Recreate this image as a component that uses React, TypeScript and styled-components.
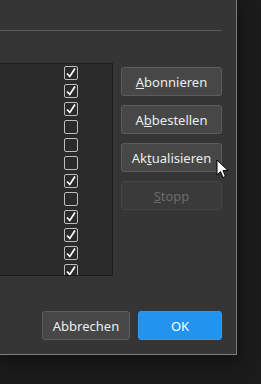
import styled, { createGlobalStyle } from 'styled-components';

const GlobalStyle = createGlobalStyle`
  html, body { margin: 0; padding: 0; }
  body {
    background: #1b1b1b;
    font-family: "Noto Sans", "Open Sans", sans-serif;
    font-size: 13px;
  }
`;

const Screen = styled.div`
  position: relative;
  width: 261px;
  height: 384px;
  overflow: hidden;
  background: #1b1b1b;
`;

const Dialog = styled.div`
  box-sizing: border-box;
  width: 237px;
  height: 355px;
  background: #353535;
  border-right: 1px solid #7d7d7d;
  border-bottom: 1px solid #7d7d7d;
  box-shadow: 0 6px 18px rgba(0, 0, 0, 0.45);
  display: flex;
  flex-direction: column;
  padding: 30px 14px 14px 0;
`;

const Separator = styled.div`
  height: 1px;
  background: #5c5c5c;
`;

const Body = styled.div`
  display: flex;
  gap: 8px;
  margin-top: 32px;
`;

const List = styled.div`
  box-sizing: border-box;
  width: 114px;
  height: 213px;
  background: #2a2a2a;
  border-top: 1px solid #1c1c1c;
  border-right: 1px solid #1c1c1c;
  border-bottom: 1px solid #1c1c1c;
  overflow: hidden;
  display: flex;
  flex-direction: column;
  align-items: flex-end;
  padding: 2px 34px 0 0;
`;

const Row = styled.div`
  flex-shrink: 0;
  height: 18px;
  display: flex;
  align-items: flex-start;
`;

const Box = styled.div`
  box-sizing: border-box;
  width: 14px;
  height: 14px;
  border: 1px solid #bdbdbd;
  border-radius: 2px;
  display: flex;
  align-items: center;
  justify-content: center;
`;

const Side = styled.div`
  display: flex;
  flex-direction: column;
  gap: 9px;
  padding-top: 4px;
`;

const Button = styled.button<{ $primary?: boolean; $width?: number }>`
  box-sizing: border-box;
  width: ${(p) => p.$width ?? 101}px;
  height: 29px;
  border-radius: 3px;
  font-family: inherit;
  font-size: 13px;
  padding: 0;
  cursor: default;
  color: ${(p) => (p.$primary ? '#ffffff' : '#ececec')};
  background: ${(p) => (p.$primary ? '#2293ee' : '#474747')};
  border: 1px solid ${(p) => (p.$primary ? '#2e9cf5' : '#5c5c5c')};
  &:disabled {
    background: #3a3a3a;
    border-color: #444444;
    color: #6b6b6b;
  }
`;

const Footer = styled.div`
  margin-top: auto;
  display: flex;
  justify-content: flex-end;
  gap: 8px;
`;

const Cursor = styled.svg`
  position: absolute;
  left: 216px;
  top: 159px;
`;

const checks = [true, true, true, false, false, false, true, false, true, true, true, true];

const Check = () => (
  <svg width="12" height="12" viewBox="0 0 12 12">
    <path d="M2 6.5 L4.8 9.5 L10 1.5" fill="none" stroke="#ffffff" strokeWidth="1.7" />
  </svg>
);

export default function App() {
  return (
    <Screen>
      <GlobalStyle />
      <Dialog>
        <Separator />
        <Body>
          <List>
            {checks.map((c, i) => (
              <Row key={i}>
                <Box>{c && <Check />}</Box>
              </Row>
            ))}
          </List>
          <Side>
            <Button><u>A</u>bonnieren</Button>
            <Button>A<u>b</u>bestellen</Button>
            <Button>Ak<u>t</u>ualisieren</Button>
            <Button disabled><u>S</u>topp</Button>
          </Side>
        </Body>
        <Footer>
          <Button $width={88}>Abbrechen</Button>
          <Button $primary $width={84}>OK</Button>
        </Footer>
      </Dialog>
      <Cursor width="16" height="22" viewBox="0 0 16 22">
        <path d="M1 1 L1 16 L4.5 12.5 L7 18.5 L9.5 17.5 L7 11.5 L12 11.5 Z" fill="#ffffff" stroke="#000000" strokeWidth="1" strokeLinejoin="round" />
      </Cursor>
    </Screen>
  );
}
